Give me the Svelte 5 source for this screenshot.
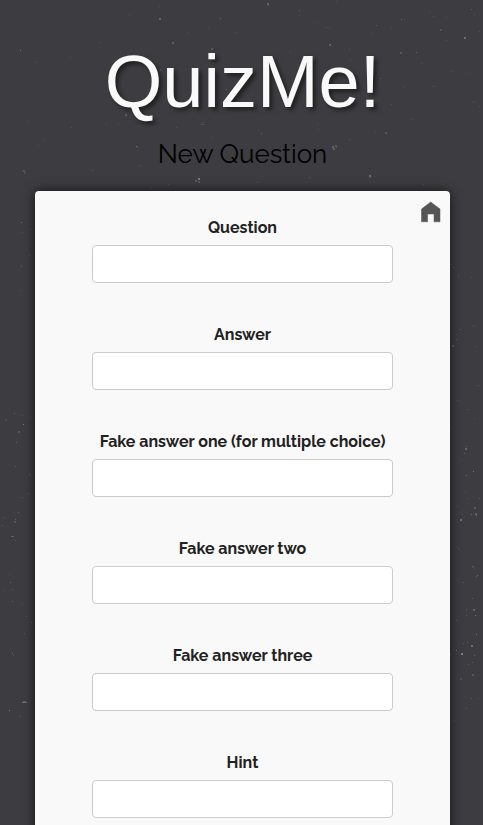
<script>
  const fields = [
    { id: 'question', label: 'Question' },
    { id: 'answer', label: 'Answer' },
    { id: 'fake-one', label: 'Fake answer one (for multiple choice)' },
    { id: 'fake-two', label: 'Fake answer two' },
    { id: 'fake-three', label: 'Fake answer three' },
    { id: 'hint', label: 'Hint' }
  ];

  // Dust of the wall texture: x, y, width, opacity
  const specks = [
    [159, 18, 2, 0.4], [220, 18, 1, 0.4], [172, 42, 2, 0.3], [211, 48, 2, 0.3], [20, 50, 1, 0.5],
    [36, 62, 1, 0.25], [99, 42, 1, 0.2], [70, 57, 1, 0.2], [129, 15, 1, 0.15], [159, 6, 1, 0.15],
    [208, 28, 1, 0.2], [236, 32, 1, 0.2], [188, 32, 1, 0.15], [160, 69, 2, 0.2], [226, 89, 1, 0.3],
    [125, 114, 2, 0.3], [147, 115, 1, 0.35], [28, 121, 1, 0.2], [71, 127, 1, 0.2], [106, 123, 1, 0.2],
    [118, 123, 1, 0.2], [176, 127, 1, 0.2], [201, 124, 3, 0.2], [203, 122, 1, 0.3], [44, 139, 1, 0.2],
    [38, 145, 1, 0.2], [136, 146, 1, 0.6], [137, 147, 1, 0.3], [212, 137, 1, 0.2], [23, 170, 2, 0.3],
    [24, 172, 2, 0.2], [92, 170, 1, 0.35], [140, 165, 1, 0.3], [195, 180, 2, 0.3], [198, 178, 2, 0.6],
    [198, 181, 2, 0.3], [168, 184, 1, 0.2], [151, 188, 1, 0.2], [267, 3, 2, 0.4], [268, 5, 1, 0.4],
    [299, 10, 1, 0.3], [299, 15, 1, 0.2], [336, 1, 1, 0.2], [326, 27, 1, 0.3], [329, 28, 1, 0.2],
    [314, 22, 1, 0.15], [329, 44, 2, 0.35], [332, 46, 1, 0.2], [349, 49, 1, 0.2], [350, 59, 1, 0.2],
    [376, 25, 1, 0.3], [391, 27, 1, 0.2], [371, 33, 1, 0.2], [401, 19, 1, 0.35], [404, 19, 1, 0.2],
    [429, 11, 1, 0.2], [433, 16, 1, 0.2], [440, 29, 2, 0.2], [446, 17, 1, 0.15], [446, 40, 1, 0.2],
    [471, 9, 1, 0.3], [474, 14, 1, 0.2], [464, 37, 2, 0.5], [479, 31, 1, 0.2], [400, 52, 2, 0.3],
    [416, 52, 1, 0.4], [421, 63, 1, 0.2], [290, 51, 1, 0.2], [380, 78, 1, 0.35], [403, 87, 1, 0.15],
    [433, 86, 1, 0.3], [452, 71, 1, 0.2], [469, 73, 1, 0.15], [473, 101, 1, 0.3], [479, 106, 1, 0.2],
    [391, 104, 1, 0.2], [411, 119, 1, 0.2], [317, 124, 1, 0.2], [318, 129, 1, 0.2], [375, 131, 1, 0.2],
    [385, 132, 2, 0.25], [261, 133, 1, 0.4], [349, 139, 1, 0.3], [246, 144, 1, 0.2], [332, 146, 2, 0.4],
    [335, 145, 2, 0.3], [333, 148, 2, 0.4], [336, 147, 1, 0.3], [369, 175, 2, 0.5], [370, 177, 1, 0.3],
    [309, 177, 1, 0.3], [257, 182, 1, 0.3], [423, 184, 1, 0.2], [21, 222, 1, 0.5], [22, 232, 1, 0.2],
    [30, 229, 1, 0.2], [29, 255, 1, 0.2], [21, 266, 1, 0.3], [21, 290, 1, 0.2], [14, 413, 1, 0.4],
    [5, 419, 2, 0.15], [22, 415, 1, 0.2], [23, 424, 1, 0.6], [18, 431, 2, 0.25], [16, 442, 1, 0.3],
    [30, 417, 1, 0.2], [15, 466, 1, 0.3], [29, 474, 1, 0.3], [30, 475, 1, 0.3], [28, 493, 1, 0.3],
    [22, 497, 1, 0.3], [18, 512, 1, 0.3], [3, 517, 1, 0.3], [15, 519, 1, 0.4], [14, 521, 2, 0.3],
    [2, 525, 1, 0.25], [11, 536, 3, 0.4], [13, 539, 1, 0.3], [15, 540, 1, 0.3], [9, 574, 1, 0.2],
    [10, 582, 1, 0.4], [12, 589, 1, 0.35], [3, 590, 1, 0.2], [12, 601, 1, 0.35], [22, 603, 1, 0.2],
    [26, 616, 1, 0.2], [31, 622, 1, 0.3], [24, 633, 1, 0.25], [12, 653, 1, 0.4], [13, 655, 1, 0.3],
    [23, 701, 3, 0.4], [22, 702, 5, 0.5], [29, 702, 1, 0.3], [9, 710, 1, 0.6], [20, 716, 1, 0.3],
    [451, 264, 1, 0.3], [453, 267, 1, 0.3], [458, 276, 1, 0.25], [471, 277, 1, 0.2], [473, 325, 1, 0.3],
    [460, 329, 1, 0.3], [456, 334, 1, 0.2], [456, 339, 1, 0.3], [452, 345, 2, 0.3], [475, 346, 1, 0.2],
    [478, 385, 1, 0.3], [457, 400, 1, 0.2], [468, 409, 1, 0.3], [474, 418, 1, 0.2], [451, 428, 1, 0.2],
    [466, 446, 1, 0.3], [465, 448, 2, 0.4], [464, 453, 1, 0.4], [473, 471, 1, 0.6], [466, 475, 1, 0.5],
    [461, 460, 1, 0.2], [465, 492, 1, 0.2], [468, 498, 1, 0.2], [479, 498, 1, 0.3], [456, 506, 1, 0.2],
    [474, 507, 2, 0.3], [475, 513, 2, 0.4], [476, 515, 1, 0.5], [471, 514, 1, 0.4], [462, 514, 1, 0.3],
    [460, 519, 2, 0.5], [456, 546, 1, 0.2], [458, 548, 1, 0.3], [472, 566, 1, 0.5], [473, 567, 1, 0.3],
    [477, 575, 1, 0.5], [476, 576, 1, 0.4], [463, 582, 1, 0.3], [472, 598, 1, 0.3], [466, 609, 1, 0.3],
    [473, 609, 2, 0.4], [475, 615, 1, 0.5], [466, 615, 1, 0.3], [456, 620, 1, 0.3], [476, 634, 1, 0.5],
    [463, 643, 1, 0.3], [467, 642, 1, 0.3], [471, 645, 2, 0.5], [456, 650, 1, 0.5], [461, 653, 2, 0.7],
    [474, 655, 1, 0.4], [450, 654, 1, 0.4], [472, 662, 1, 0.3], [468, 664, 1, 0.3], [472, 674, 2, 0.3],
    [460, 678, 2, 0.2], [471, 698, 1, 0.3], [478, 698, 1, 0.2], [466, 708, 1, 0.3], [454, 720, 1, 0.2]
  ];
</script>

<div class="page">
  <svg class="dust" aria-hidden="true">
    {#each specks as [x, y, w, o]}
      <rect {x} {y} width={w} height={w === 2 ? 2 : 1} fill="#fff" opacity={o * 0.5} />
    {/each}
  </svg>

  <header>
    <h1>QuizMe!</h1>
    <h2>New Question</h2>
  </header>

  <main>
    <a class="home" href="#home" aria-label="Home">
      <svg width="20" height="20" viewBox="0 0 20 20" aria-hidden="true">
        <path d="M9.7 0 L19 7 V19.8 H13 V12 H6.6 V19.8 H0.5 V7 Z" fill="#555" stroke="#555" stroke-width="0.5" stroke-linejoin="round" />
      </svg>
    </a>
    <form>
      {#each fields as field}
        <div class="field">
          <label for={field.id}>{field.label}</label>
          <input id={field.id} name={field.id} type="text" />
        </div>
      {/each}
    </form>
  </main>
</div>

<style>
  :global(body) {
    margin: 0;
    background: #3d3c40;
  }

  .page {
    position: relative;
    box-sizing: border-box;
    padding: 38px 33px 0 35px;
    font-family: Raleway, Lato, "Liberation Sans", sans-serif;
    text-align: center;
  }

  .dust {
    position: absolute;
    inset: 0;
    width: 100%;
    height: 100%;
    pointer-events: none;
    shape-rendering: crispEdges;
  }

  header {
    position: relative;
  }

  h1 {
    margin: 0;
    font: 400 74px/88px "Liberation Sans", Arial, sans-serif;
    color: #f9f9f9;
    text-shadow: 3px 3px 4px rgba(0, 0, 0, 0.5);
  }

  h2 {
    margin: 10px 0 18px;
    font-size: 26px;
    font-weight: 400;
    line-height: 37px;
    color: #000;
  }

  main {
    position: relative;
    padding: 25px 57px;
    border-radius: 4px;
    background: #f9f9f9;
    box-shadow: 0 0 12px rgba(0, 0, 0, 0.7);
  }

  .home {
    position: absolute;
    top: 11px;
    right: 9px;
    line-height: 0;
  }

  .home svg {
    overflow: visible;
  }

  .field {
    display: flex;
    flex-direction: column;
    gap: 5px;
    margin-bottom: 40px;
  }

  label {
    font-size: 16px;
    font-weight: 700;
    line-height: 24px;
    color: #222;
    white-space: nowrap;
  }

  input {
    box-sizing: border-box;
    width: 100%;
    height: 38px;
    padding: 6px 10px;
    border: 1px solid #ccc;
    border-radius: 4px;
    background: #fff;
    font: inherit;
  }
</style>
